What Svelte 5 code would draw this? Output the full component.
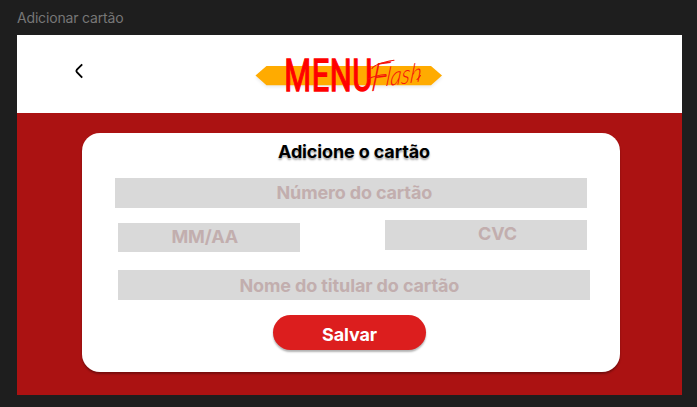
<script>
  let number = 'Número do cartão';
  let expiry = 'MM/AA';
  let cvc = 'CVC';
  let holder = 'Nome do titular do cartão';
</script>

<div class="canvas">
  <div class="label">Adicionar cartão</div>
  <main class="frame">
    <header>
      <svg class="back" width="10" height="16" viewBox="0 0 10 16" aria-label="Voltar">
        <path d="M8.2 1.4 L2.9 6.6 Q1.8 7.9 2.9 9.2 L8.2 14.6" fill="none" stroke="#000" stroke-width="1.9" />
      </svg>
      <svg class="logo" width="190" height="46" viewBox="0 0 190 46">
        <path class="banner" d="M0.5 21.5 L11.5 12 H176 L187 21.5 L176 31.3 H11.5 Z" fill="#ffab00" />
        <text class="menu" transform="translate(29.2 36.5) scale(.71 1)" textLength="124" lengthAdjust="spacing">MENU</text>
        <g class="flash" transform="translate(115 37.5) rotate(-8) skewX(-14)">
          <text class="initial" textLength="18" lengthAdjust="spacingAndGlyphs">F</text>
          <text class="rest" x="15" y="-3" textLength="36" lengthAdjust="spacingAndGlyphs">lash</text>
        </g>
        <path class="swash" d="M117 14.5 Q120 9.5 139 6.2 M113 25 Q121 21 131 20.5 M162 25.5 Q163 25 165.5 21.5" />
      </svg>
    </header>
    <section class="body">
      <form class="card">
        <h1>Adicione o cartão</h1>
        <div class="field number"><span>{number}</span></div>
        <div class="pair">
          <div class="field expiry"><span>{expiry}</span></div>
          <div class="field cvc"><span>{cvc}</span></div>
        </div>
        <div class="field holder"><span>{holder}</span></div>
        <button type="button">Salvar</button>
      </form>
    </section>
  </main>
</div>

<style>
  :global(body) { margin: 0; background: #1e1e1e; }
  .canvas {
    box-sizing: border-box;
    width: 697px;
    height: 407px;
    padding: 9px 15px 12px 17px;
    background: #1e1e1e;
    font-family: Inter, sans-serif;
    overflow: hidden;
  }
  .label { box-sizing: border-box; height: 26px; font-size: 14px; line-height: 17px; color: #777; letter-spacing: -0.17px; }
  .frame { width: 665px; height: 360px; background: #ab1212; }
  header { display: flex; height: 78px; background: #fff; }
  .back { margin: 28px 0 0 57px; }
  .logo { margin: 19px 0 0 171px; overflow: visible; }
  .banner { filter: drop-shadow(0 2px 1.5px rgba(0, 0, 0, .08)); }
  .menu { font: 400 43.5px Roboto, sans-serif; fill: #f00; stroke: #f00; stroke-width: 1.3px; }
  .flash { fill: #f5140a; }
  .initial { font: italic 300 38px Lato, sans-serif; }
  .rest { font: italic 300 26px Lato, sans-serif; }
  .swash { fill: none; stroke: #f5140a; stroke-width: 1.1px; stroke-linecap: round; }
  .body { display: flex; padding: 19.5px 0 0 65px; }
  .card {
    box-sizing: border-box;
    display: flex;
    flex-direction: column;
    width: 538px;
    height: 239.5px;
    padding: 8px 30px 0 33px;
    border-radius: 18px;
    background: #fff;
    box-shadow: 0 2px 2px rgba(0, 0, 0, .3);
  }
  h1 {
    margin: 0 0 15.5px 163px;
    height: 22px;
    font-size: 18px;
    line-height: 22px;
    font-weight: 700;
    letter-spacing: -0.14px;
    white-space: nowrap;
    text-shadow: 0 2px 2px rgba(0, 0, 0, .35);
  }
  .field {
    box-sizing: border-box;
    height: 29.7px;
    background: #d9d9d9;
    color: #c2aeae;
    font-size: 18px;
    line-height: 30px;
    font-weight: 700;
    letter-spacing: -0.15px;
    white-space: nowrap;
  }
  .number { width: 472px; padding-left: 161.5px; }
  .pair { display: flex; justify-content: space-between; width: 469px; margin: 12.5px 0 0 3px; }
  .expiry { width: 182px; margin-top: 2.5px; padding-left: 53.5px; line-height: 28px; }
  .cvc { width: 202.5px; padding-left: 93.5px; line-height: 28px; }
  .holder { width: 472px; margin: 18px 0 0 3px; padding-left: 121.5px; line-height: 31px; letter-spacing: -0.12px; }
  button {
    width: 153px;
    height: 34.5px;
    margin: 15px 0 0 158px;
    padding: 5px 0 0;
    border: 0;
    border-radius: 18px;
    background: #dc1e1e;
    color: #fff;
    font: 700 18px/30px Inter, sans-serif;
    letter-spacing: -0.12px;
    box-shadow: 0 2px 2px rgba(0, 0, 0, .3);
  }
</style>
